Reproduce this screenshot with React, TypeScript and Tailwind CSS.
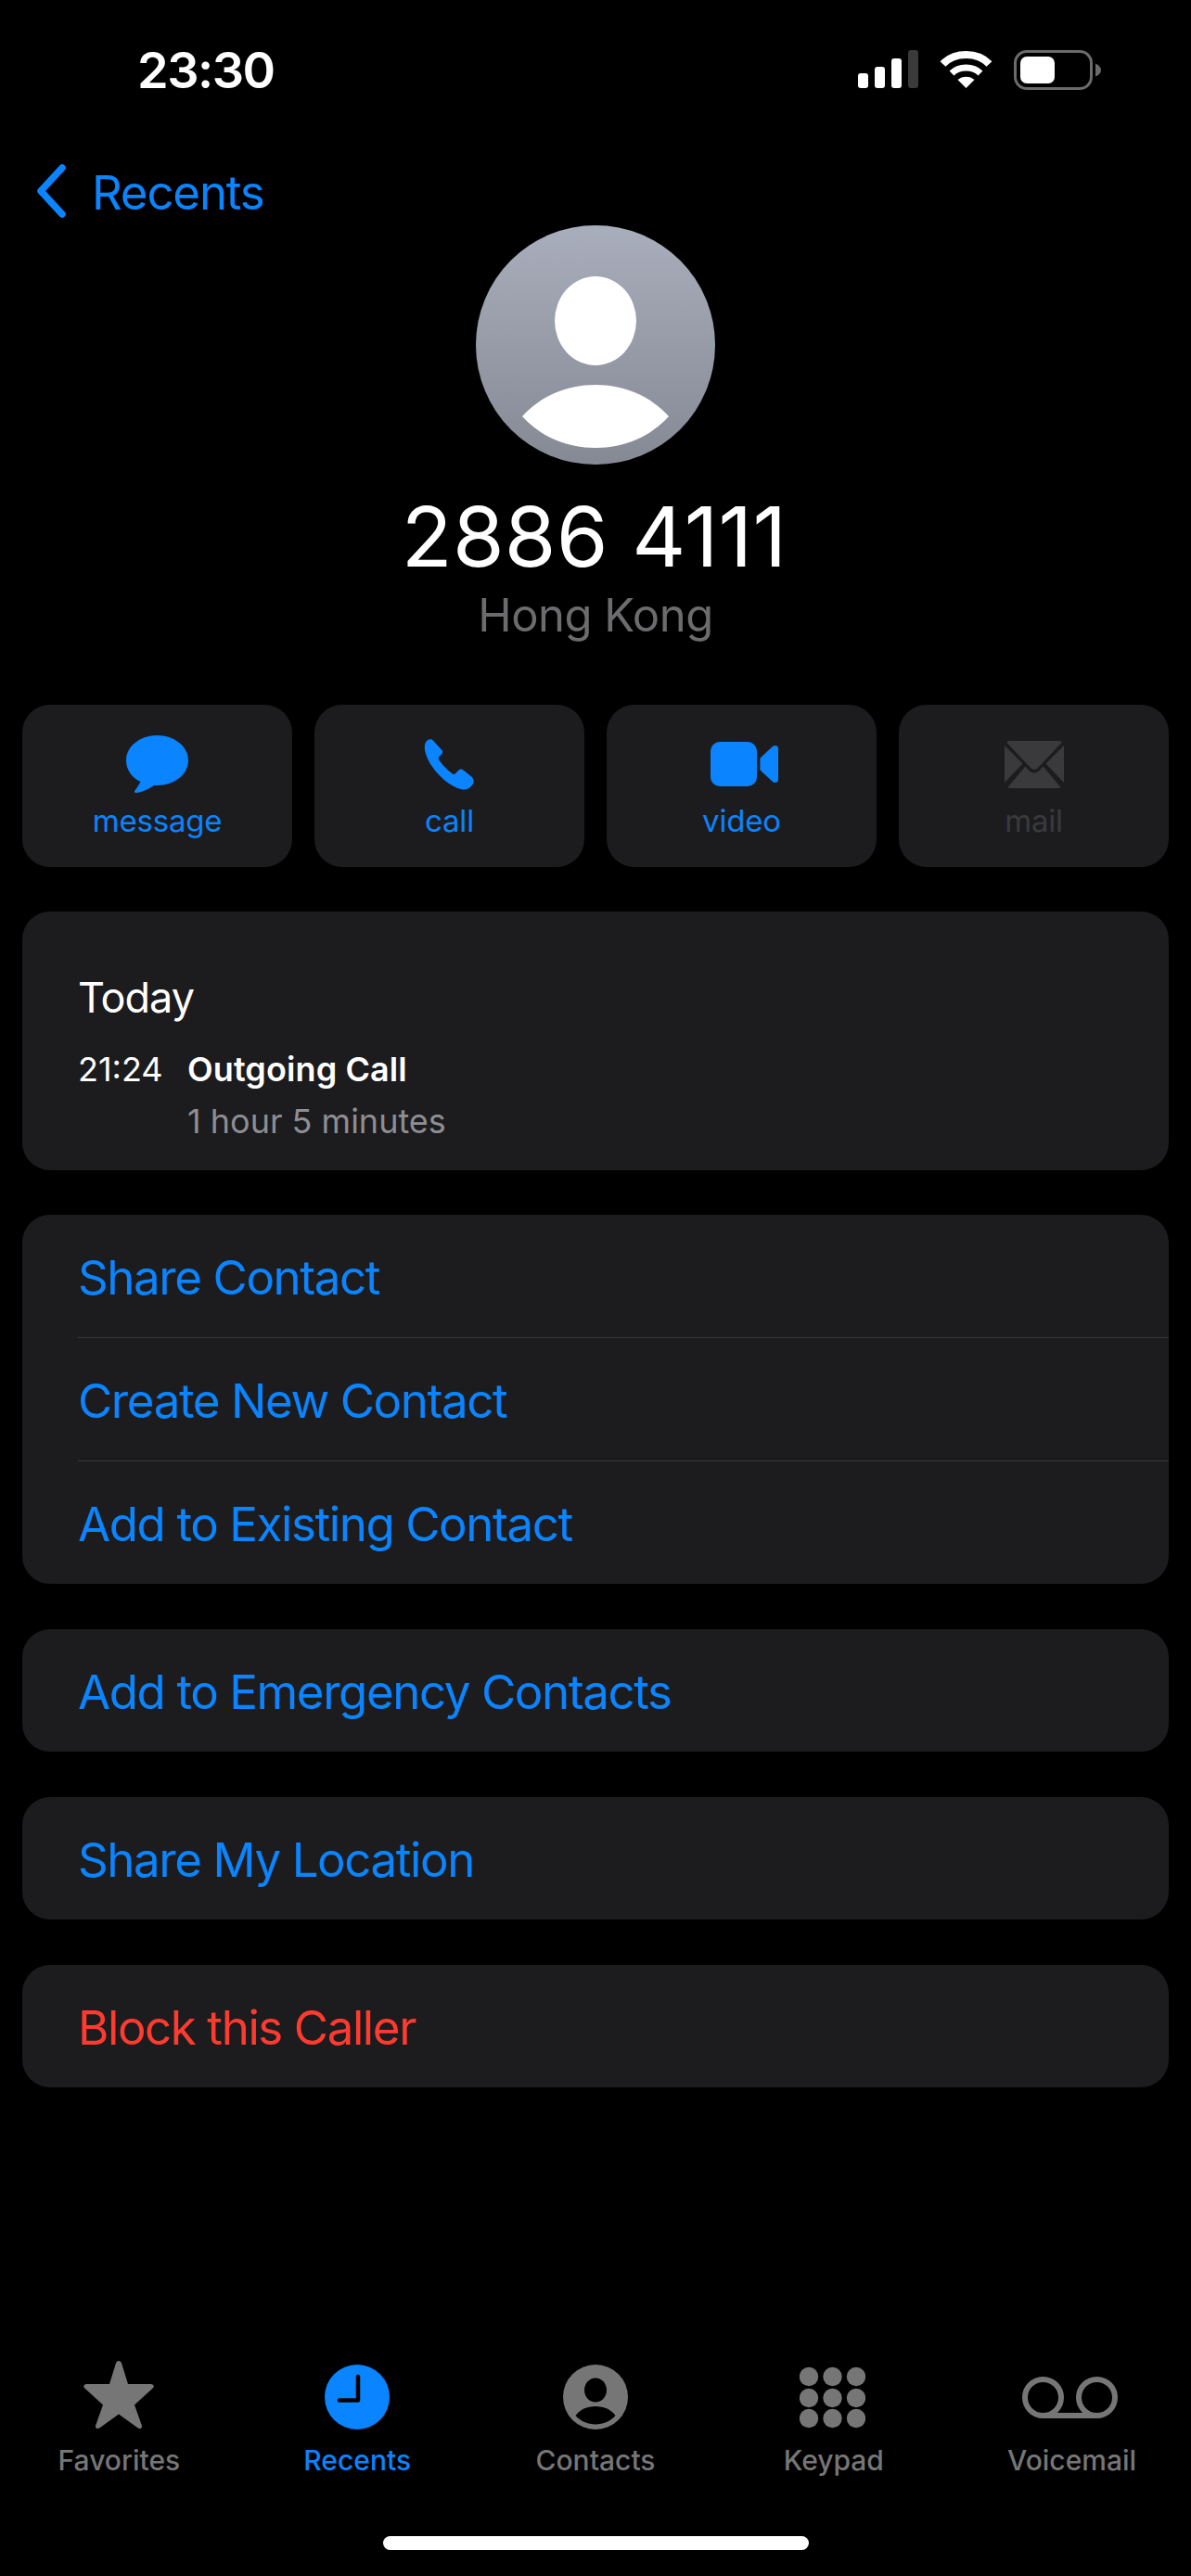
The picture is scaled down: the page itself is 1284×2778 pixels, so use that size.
const BLUE = "#0a84ff";

function Signal() {
  return (
    <svg width="65" height="41" viewBox="0 0 65 41">
      <rect x="0" y="25" width="11" height="16" rx="3" fill="#fff" />
      <rect x="18" y="18" width="11" height="23" rx="3" fill="#fff" />
      <rect x="36" y="9" width="11" height="32" rx="3" fill="#fff" />
      <rect x="54" y="0" width="11" height="41" rx="3" fill="#3a3a3c" />
    </svg>
  );
}

function Wifi() {
  return (
    <svg width="57" height="41" viewBox="0 0 57 41">
      <path d="M3.5 15 C16 1.5 41 1.5 53.5 15" fill="none" stroke="#fff" strokeWidth="8" />
      <path d="M13 25 C21 17 36 17 44 25" fill="none" stroke="#fff" strokeWidth="7" />
      <path d="M28.5 41 L19.5 32 C24.5 27.5 32.5 27.5 37.5 32 Z" fill="#fff" />
    </svg>
  );
}

function Battery() {
  return (
    <svg width="94" height="43" viewBox="0 0 94 43">
      <rect x="1.5" y="1.5" width="82" height="40" rx="12.5" fill="none" stroke="#6b6b6b" strokeWidth="3" />
      <rect x="7" y="7" width="37" height="29" rx="7" fill="#fff" />
      <path d="M88 14.5 C92 16 94 19 94 21.5 C94 24 92 27 88 28.5 Z" fill="#6b6b6b" />
    </svg>
  );
}

function Avatar() {
  return (
    <svg width="258" height="258" viewBox="0 0 258 258">
      <defs>
        <linearGradient id="av" x1="0" y1="0" x2="0" y2="1">
          <stop offset="0" stopColor="#a9aebc" />
          <stop offset="1" stopColor="#858994" />
        </linearGradient>
      </defs>
      <circle cx="129" cy="129" r="129" fill="url(#av)" />
      <ellipse cx="129" cy="103" rx="44" ry="48" fill="#fff" />
      <path d="M50 206 C70 184 98 172 129 172 C160 172 188 184 208 206 C188 228 160 240 129 240 C98 240 70 228 50 206 Z" fill="#fff" />
    </svg>
  );
}

function MessageIcon() {
  return (
    <svg width="67" height="62" viewBox="0 0 67 62">
      <path d="M33.5 0 C52 0 67 12 67 27 C67 42 52 54 33.5 54 L30 54 C24 58 16 62 10.5 62 C9 62 8.5 61 9.3 59.8 C11 57.5 14 53 15.5 50 C6 45.5 0 37 0 27 C0 12 15 0 33.5 0 Z" fill={BLUE} />
    </svg>
  );
}

function PhoneIcon() {
  return (
    <svg width="55" height="55" viewBox="0 0 55 55" className="mr-[3px]">
      <path d="M4.5 1.5 C6.5 0 9.5 -0.3 11 1.8 L20.5 12 C21.8 14 21 15.5 19.5 17 L17.5 19 C16.5 20 16.5 21 17.2 22.2 C21 28 26 33.3 32 37.5 C33.2 38.2 34.2 38 35.2 37 L38 34 C39.7 32.4 41.5 32 43.5 33.5 L52.8 41 C55.2 43.2 55 46.8 53.2 49.5 C50.5 53.5 47 55 42.5 54.5 C31 52 18 42 9.5 29 C3.5 20 -1.5 7 4.5 1.5 Z" fill={BLUE} />
    </svg>
  );
}

function VideoIcon() {
  return (
    <svg width="73" height="48" viewBox="0 0 73 48" className="ml-[6px]">
      <rect x="0" y="0" width="50" height="48" rx="10" fill={BLUE} />
      <path d="M54 17 L67 5 C69.5 3 73 4 73 7 L73 41 C73 44 69.5 45 67 43 L54 31 C53.6 30.4 53.4 30 53.4 29 L53.4 19 C53.4 18 53.6 17.6 54 17 Z" fill={BLUE} />
    </svg>
  );
}

function MailIcon() {
  return (
    <svg width="64" height="51" viewBox="0 0 64 51">
      <path d="M5 0 L59 0 C61 0 62 1 61.5 2 L36 29 C33.5 31.5 30.5 31.5 28 29 L2.5 2 C2 1 3 0 5 0 Z" fill="#3a3a3c" />
      <path d="M0 5 L0 45 L19.5 24.5 Z" fill="#3a3a3c" />
      <path d="M64 5 L64 45 L44.5 24.5 Z" fill="#3a3a3c" />
      <path d="M3.5 50 C4 50.6 5 51 6 51 L58 51 C59 51 60 50.6 60.5 50 L41.5 27.5 L38.5 31 C34.5 35.5 29.5 35.5 25.5 31 L22.5 27.5 Z" fill="#3a3a3c" />
    </svg>
  );
}

function StarIcon() {
  return (
    <svg width="76" height="73" viewBox="0 0 76 73" className="mb-[5px]">
      <path d="M38 0 C39.6 0 40.6 1 41.2 3 L48 25 L72.5 25 C75.5 25 76.8 27.5 74.7 29.6 L55 47.5 L62.8 69.5 C63.8 72.5 60.8 74 58.5 72.2 L38 57.5 L17.5 72.2 C15.2 74 12.2 72.5 13.2 69.5 L21 47.5 L1.3 29.6 C-0.8 27.5 0.5 25 3.5 25 L28 25 L34.8 3 C35.4 1 36.4 0 38 0 Z" fill="#767676" />
    </svg>
  );
}

function ClockIcon() {
  return (
    <svg width="70" height="70" viewBox="0 0 70 70">
      <circle cx="35" cy="35" r="35" fill={BLUE} />
      <path d="M36 13 L36 38.5 L16 38.5" fill="none" stroke="#000" strokeWidth="4.5" strokeLinecap="round" strokeLinejoin="round" />
    </svg>
  );
}

function ContactIcon() {
  return (
    <svg width="70" height="70" viewBox="0 0 70 70">
      <circle cx="35" cy="35" r="35" fill="#767676" />
      <ellipse cx="35" cy="27.5" rx="12" ry="13" fill="#000" />
      <path d="M13.5 55 C18 48.5 26 45 35 45 C44 45 52 48.5 56.5 55 C51 61 43.5 64.5 35 64.5 C26.5 64.5 19 61 13.5 55 Z" fill="#000" />
    </svg>
  );
}

function KeypadIcon() {
  const ys = [12, 35, 57];
  const xs = [10, 35.5, 61];
  return (
    <svg width="71" height="69" viewBox="0 0 71 69" className="mr-[2px]">
      {ys.map((y) =>
        xs.map((x) => <circle key={`${x}-${y}`} cx={x} cy={y} r="10.2" fill="#767676" />)
      )}
    </svg>
  );
}

function VoicemailIcon() {
  return (
    <svg width="103" height="45" viewBox="0 0 103 45" className="mr-[4px]">
      <circle cx="22.5" cy="22.5" r="19.5" fill="none" stroke="#767676" strokeWidth="6" />
      <circle cx="80.5" cy="22.5" r="19.5" fill="none" stroke="#767676" strokeWidth="6" />
      <path d="M22.5 42 L80.5 42" stroke="#767676" strokeWidth="6" />
    </svg>
  );
}

function ActionButton({ icon, label, disabled }: { icon: React.ReactNode; label: string; disabled?: boolean }) {
  return (
    <div className="flex h-[175px] flex-col items-center rounded-[30px] bg-[#1c1c1e]">
      <div className="mt-[31px] flex h-[66px] w-full items-center justify-center">{icon}</div>
      <div className={`mt-[7px] text-[33px] leading-[42px] tracking-[-0.2px] ${disabled ? "text-[#3a3a3c]" : "text-[#0a84ff]"}`}>{label}</div>
    </div>
  );
}

function Row({ label, red, divider }: { label: string; red?: boolean; divider?: boolean }) {
  return (
    <div className="pl-[60px]">
      <div className={`flex items-center pt-[4px] text-[51px] tracking-[-1.4px] ${red ? "text-[#ff3b30]" : "text-[#0a84ff]"} ${divider ? "h-[133px] border-b border-[#38383a]" : "h-[132px]"}`}>
        {label}
      </div>
    </div>
  );
}

function Tab({ icon, label, active }: { icon: React.ReactNode; label: string; active?: boolean }) {
  return (
    <div className="flex flex-col items-center">
      <div className="flex h-[76px] items-center justify-center">{icon}</div>
      <div className={`mt-[10px] text-[30px] leading-[40px] font-medium ${active ? "text-[#0a84ff]" : "text-[#767676]"}`}>{label}</div>
    </div>
  );
}

export default function App() {
  return (
    <div className="flex h-[2778px] w-[1284px] flex-col overflow-hidden bg-black font-['Inter',sans-serif] text-white">
      <div className="flex h-[150px] items-start justify-between pl-[148px] pr-[97px] pt-[44px]">
        <div className="text-[54px] leading-[64px] font-semibold tracking-[-1.5px]">23:30</div>
        <div className="mt-[10px] flex items-start gap-[23px]">
          <Signal />
          <Wifi />
          <Battery />
        </div>
      </div>

      <div className="flex h-[93px] items-start pl-[38px]">
        <svg width="33" height="58" viewBox="0 0 33 58" className="mt-[27px]">
          <path d="M29 4 L6 29 L29 54" fill="none" stroke={BLUE} strokeWidth="7.5" strokeLinecap="round" strokeLinejoin="round" />
        </svg>
        <div className="ml-[28px] mt-[28px] text-[51px] leading-[60px] tracking-[-1.2px] text-[#0a84ff]">Recents</div>
      </div>

      <div className="flex flex-col items-center">
        <Avatar />
        <div className="mt-[25px] pr-[3px] text-[90px] leading-[106px] tracking-[0.2px]">2886 4111</div>
        <div className="mt-[3px] text-[49px] leading-[58px] tracking-[-0.5px] text-[#6c6c6e]">Hong Kong</div>
      </div>

      <div className="mx-[24px] mt-[67px] grid grid-cols-4 gap-[24px]">
        <ActionButton icon={<MessageIcon />} label="message" />
        <ActionButton icon={<PhoneIcon />} label="call" />
        <ActionButton icon={<VideoIcon />} label="video" />
        <ActionButton icon={<MailIcon />} label="mail" disabled />
      </div>

      <div className="mx-[24px] mt-[48px] h-[279px] rounded-[30px] bg-[#1c1c1e] pl-[60px] pt-[65px]">
        <div className="text-[45px] leading-[56px] tracking-[-1px]">Today</div>
        <div className="mt-[25px] flex">
          <div className="w-[118px] text-[36px] leading-[48px]">21:24</div>
          <div>
            <div className="text-[36px] leading-[48px] font-semibold tracking-[0.1px]">Outgoing Call</div>
            <div className="mt-[8px] text-[36px] leading-[48px] text-[#8e8e93]">1 hour 5 minutes</div>
          </div>
        </div>
      </div>

      <div className="mx-[24px] mt-[48px] rounded-[30px] bg-[#1c1c1e]">
        <Row label="Share Contact" divider />
        <Row label="Create New Contact" divider />
        <Row label="Add to Existing Contact" />
      </div>
      <div className="mx-[24px] mt-[49px] rounded-[30px] bg-[#1c1c1e]">
        <Row label="Add to Emergency Contacts" />
      </div>
      <div className="mx-[24px] mt-[49px] rounded-[30px] bg-[#1c1c1e]">
        <Row label="Share My Location" />
      </div>
      <div className="mx-[24px] mt-[49px] rounded-[30px] bg-[#1c1c1e]">
        <Row label="Block this Caller" red />
      </div>

      <div className="mt-[296px] grid grid-cols-5">
        <Tab icon={<StarIcon />} label="Favorites" />
        <Tab icon={<ClockIcon />} label="Recents" active />
        <Tab icon={<ContactIcon />} label="Contacts" />
        <Tab icon={<KeypadIcon />} label="Keypad" />
        <Tab icon={<VoicemailIcon />} label="Voicemail" />
      </div>

      <div className="mx-auto mt-[62px] h-[15px] w-[459px] rounded-full bg-white" />
    </div>
  );
}
